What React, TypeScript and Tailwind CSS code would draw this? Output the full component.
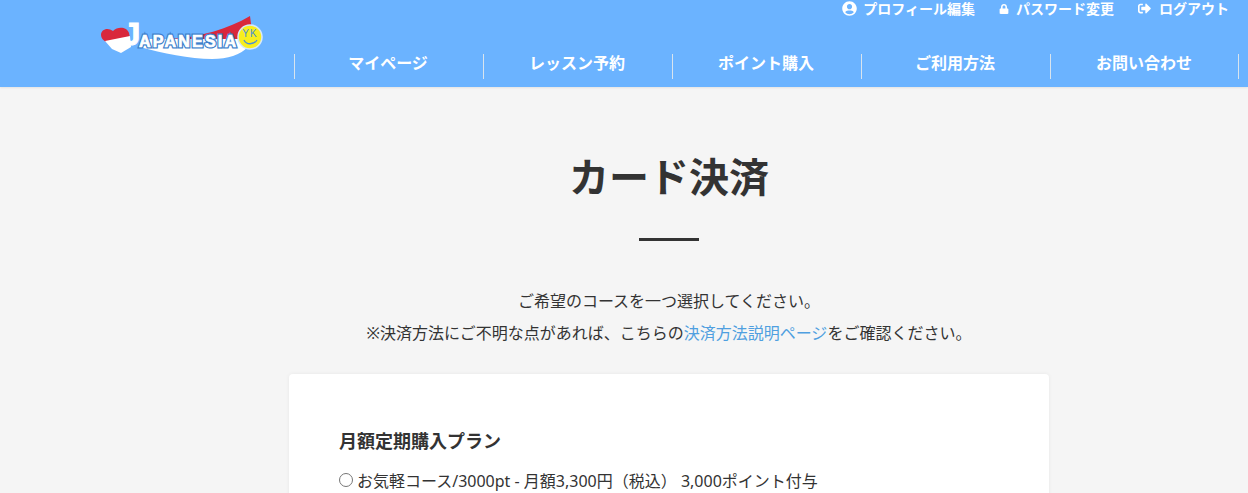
import React from 'react';
import { FaUserCircle, FaLock, FaSignOutAlt } from 'react-icons/fa';

const jpFont = "font-['Noto_Sans','Noto_Sans_CJK_JP',sans-serif]";

const navItems = ['マイページ', 'レッスン予約', 'ポイント購入', 'ご利用方法', 'お問い合わせ'];

const Logo = () => (
  <svg width="166" height="48" viewBox="0 0 166 48" className="block overflow-visible">
    {/* flag banner */}
    <path d="M70 24 C100 22 128 14 150 1 L152 16 L140 26 Z" fill="#d9283c" />
    <path d="M40 31 L50 24 L140 24 L148 32 C140 40 128 44 112 44 C90 44 62 38 40 32 Z" fill="#fff" />
    {/* heart */}
    <path d="M1 20 C1 14 8 12 13 16 C18 11 27 12 29 18 L30 23 L14 28 L6 27 C3 25 1 23 1 20 Z" fill="#d9283c" />
    <path d="M5 26 L30 21 L31 32 L21 38 L12 34 Z" fill="#fff" />
    <text x="23" y="30" fontFamily="'Liberation Sans',sans-serif" fontWeight="700" fontSize="31" fill="#fff" stroke="#fff" strokeWidth="1">J</text>
    <text aria-hidden="true" x="39" y="32" fontFamily="'Liberation Sans',sans-serif" fontWeight="700" fontSize="16" fill="#3d7fcb" stroke="#3d7fcb" strokeWidth="3.2" textLength="97" lengthAdjust="spacing">APANESIA</text>
    <text x="39" y="32" fontFamily="'Liberation Sans',sans-serif" fontWeight="700" fontSize="16" fill="#fff" stroke="#fff" strokeWidth="0.7" textLength="97" lengthAdjust="spacing">APANESIA</text>
    {/* face */}
    <circle cx="150" cy="22" r="12" fill="#f7ee1e" stroke="#d6e8fb" strokeWidth="1.5" />
    <text x="150" y="22" textAnchor="middle" fontFamily="'Liberation Sans',sans-serif" fontSize="10" fill="#4a8fd8" letterSpacing="1">YK</text>
    <path d="M144 25 C146 30 154 30 157 25" fill="none" stroke="#4a8fd8" strokeWidth="1.3" />
  </svg>
);

const App = () => {
  return (
    <div className={`h-[493px] overflow-hidden bg-[#f5f5f5] text-[#333333] ${jpFont}`}>
      <header className="h-[87px] bg-[#6bb3ff] flex shadow-[0_1px_2px_rgba(0,0,0,0.08)]">
        <div className="w-[294px] shrink-0 pl-[100px] pt-[15px]">
          <Logo />
        </div>
        <div className="flex-1 flex flex-col">
          <div className="h-[54px] flex justify-end pr-[19px] text-white text-[14px] font-bold">
            <a className="flex items-center gap-[6px] h-[17px]"><FaUserCircle className="text-[15px]" />プロフィール編集</a>
            <a className="ml-[24px] flex items-center gap-[7px] h-[17px]"><FaLock className="text-[10px]" />パスワード変更</a>
            <a className="ml-[24px] flex items-center gap-[8px] h-[17px]"><FaSignOutAlt className="text-[13px]" />ログアウト</a>
          </div>
          <nav className="flex w-[945px] h-[25px] border-r border-[#d8e4ee]">
            {navItems.map((item) => (
              <a key={item} className="w-[189px] shrink-0 flex items-center justify-center pb-[8px] pr-[2px] border-l border-[#d8e4ee] text-white text-[16px] font-bold">
                {item}
              </a>
            ))}
          </nav>
        </div>
      </header>

      <main className="flex flex-col items-center pl-[90px]">
        <h1 className="mt-[60px] text-[40px] leading-[60px] font-bold">カード決済</h1>
        <div className="mt-[31px] w-[60px] h-[3px] bg-[#333333]"></div>
        <p className="mt-[44px] text-[16px] leading-[32px] text-center">
          ご希望のコースを一つ選択してください。
          <br />
          ※決済方法にご不明な点があれば、こちらの<a className="text-[#4f9fe0]">決済方法説明ページ</a>をご確認ください。
        </p>
        <section className="mt-[25px] w-[760px] bg-white rounded-[4px] shadow-[0_0_4px_rgba(0,0,0,0.06)] px-[50px] pt-[52px] pb-[50px]">
          <h2 className="text-[18px] leading-[30px] font-bold">月額定期購入プラン</h2>
          <label className="mt-[13px] flex items-center gap-[4px] text-[16px] leading-[24px]">
            <input type="radio" name="plan" className="appearance-none m-0 w-[14px] h-[14px] rounded-full border border-[#767676] bg-white mb-[2px]" />
            お気軽コース/3000pt - 月額3,300円（税込） 3,000ポイント付与
          </label>
        </section>
      </main>
    </div>
  );
};

export default App;
